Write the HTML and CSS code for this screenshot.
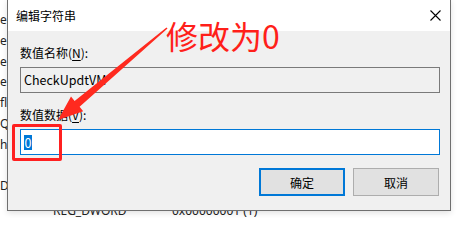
FILE: index.html
```html
<!DOCTYPE html>
<html lang="zh-CN">
<head>
<meta charset="utf-8">
<link rel="stylesheet" href="styles.css">
</head>
<body>
<div class="desktop">
  <div class="bg-list">
    <div class="bg-row"><span class="c1">e</span></div>
    <div class="bg-row"><span class="c1">e</span></div>
    <div class="bg-row"><span class="c1">e</span></div>
    <div class="bg-row"><span class="c1">e</span></div>
    <div class="bg-row"><span class="c1">fl</span></div>
    <div class="bg-row"><span class="c1">Q</span></div>
    <div class="bg-row"><span class="c1">h</span></div>
    <div class="bg-row"><span class="c1"></span></div>
    <div class="bg-row"><span class="c1">D</span></div>
    <div class="bg-row last"><span class="c1"></span><span class="c2">REG_DWORD</span><span class="c3">0x00000001 (1)</span></div>
  </div>

  <div class="dialog">
    <div class="titlebar">
      <span class="title">编辑字符串</span>
      <span class="close"><svg width="11" height="11" viewBox="0 0 11 11"><path d="M0.5 0.5 L10.5 10.5 M10.5 0.5 L0.5 10.5" stroke="#000" stroke-width="1.1" fill="none"/></svg></span>
    </div>
    <div class="dlg-body">
      <div class="field-label">数值名称(<u>N</u>):</div>
      <div class="input readonly">CheckUpdtVM</div>
      <div class="field-label second">数值数据(<u>V</u>):</div>
      <div class="input active"><span class="sel">0</span></div>
      <div class="buttons">
        <button class="btn primary">确定</button>
        <button class="btn">取消</button>
      </div>
    </div>
  </div>

  <div class="note">修改为0</div>
  <svg class="arrow" width="457" height="218" viewBox="0 0 457 218">
    <polygon fill="#ff2a1f" points="167.5,28.6 79.6,106.8 83.2,111.2 58,120 71.0,96.6 74.6,101.0 166.5,27.4"/>
  </svg>
  <div class="mark-box"></div>
</div>
</body>
</html>
```

FILE: styles.css
```css
html, body {
  margin: 0;
  padding: 0;
  background: #ffffff;
}

.desktop {
  position: relative;
  width: 457px;
  height: 218px;
  overflow: hidden;
  background: #ffffff;
  font-family: "Noto Sans CJK SC", "Noto Sans", sans-serif;
  font-size: 12px;
  color: #000;
}

.bg-list {
  padding-top: 10px;
  display: flex;
  flex-direction: column;
}

.bg-row {
  height: 20.8px;
  line-height: 20.8px;
  display: flex;
  font-family: "Noto Sans", "Noto Sans CJK SC", sans-serif;
  font-size: 12px;
  color: #222;
}

.bg-row.last {
  margin-top: 4px;
}

.c1 {
  width: 53px;
  padding-left: 0;
}

.c2 {
  width: 119px;
}

.c3 {
  width: 120px;
}

.dialog {
  position: absolute;
  left: 7px;
  top: -1px;
  width: 444px;
  height: 212px;
  box-sizing: border-box;
  border: 1px solid #6f6f6f;
  background: #f0f0f0;
  box-shadow: 0 2px 6px rgba(0, 0, 0, 0.12);
  display: flex;
  flex-direction: column;
}

.titlebar {
  height: 31px;
  background: #ffffff;
  display: flex;
  align-items: center;
  justify-content: space-between;
  padding-left: 8px;
  flex: none;
}

.title {
  font-size: 12px;
  line-height: 17px;
}

.close {
  width: 30px;
  height: 31px;
  display: flex;
  align-items: center;
  justify-content: center;
}

.close svg {
  display: block;
}

.dlg-body {
  padding: 13px 10px 0 12px;
  display: flex;
  flex-direction: column;
}

.field-label {
  line-height: 17px;
  height: 17px;
  font-size: 12px;
}

.field-label u {
  text-decoration-thickness: 1px;
  text-underline-offset: 2px;
}

.field-label.second {
  margin-top: 13px;
}

.input {
  margin-top: 6px;
  height: 26px;
  box-sizing: border-box;
  padding: 0 3px;
  line-height: 24px;
  font-size: 12.5px;
  display: flex;
  align-items: center;
}

.input.readonly {
  background: #f0f0f0;
  border: 1px solid #7a7a7a;
  color: #000;
}

.input.active {
  background: #ffffff;
  border: 1px solid #0078d7;
}

.sel {
  background: #0078d7;
  color: #ffffff;
  line-height: 15px;
  height: 15px;
  padding: 0 0.5px;
}

.buttons {
  margin-top: 13px;
  display: flex;
  justify-content: flex-end;
  gap: 8px;
  padding-right: 1px;
}

.btn {
  width: 86px;
  height: 28px;
  box-sizing: border-box;
  background: #e1e1e1;
  border: 1px solid #adadad;
  font-family: "Noto Sans CJK SC", "Noto Sans", sans-serif;
  font-size: 12px;
  color: #000;
  padding: 0;
  margin: 0;
}

.btn.primary {
  border: 2px solid #0078d7;
}

.note {
  position: absolute;
  left: 166px;
  top: 19px;
  font-family: "Noto Sans CJK SC", sans-serif;
  font-size: 32px;
  line-height: 1;
  color: #ff1f1a;
  white-space: nowrap;
}

.arrow {
  position: absolute;
  left: 0;
  top: 0;
}

.mark-box {
  position: absolute;
  left: 12px;
  top: 124px;
  width: 50px;
  height: 37px;
  box-sizing: border-box;
  border: 3px solid #ff2020;
  border-radius: 2px;
}
```
